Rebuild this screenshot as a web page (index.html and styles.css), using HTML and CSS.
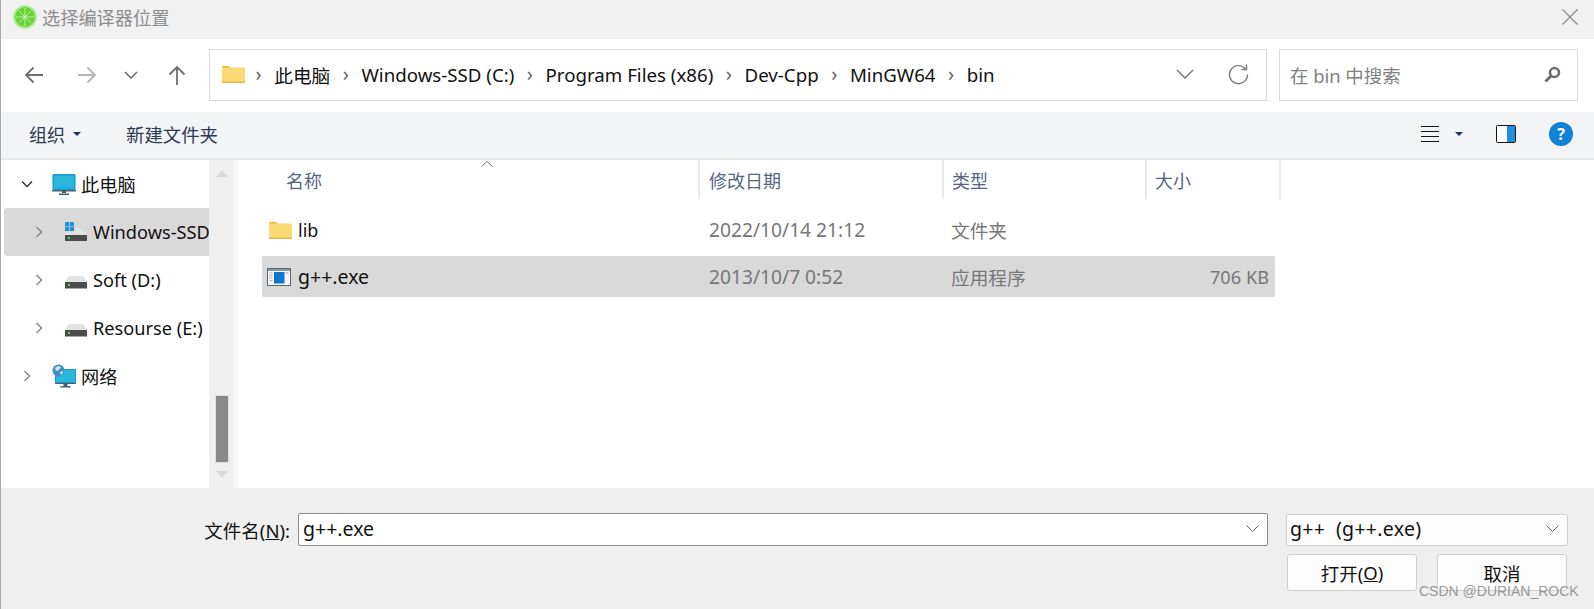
FILE: index.html
```html
<!DOCTYPE html>
<html lang="zh-CN">
<head>
  <meta charset="UTF-8">
  <title>选择编译器位置</title>
  <link rel="stylesheet" href="styles.css">
</head>
<body>
  <div class="window">
    <div class="titlebar">
      <svg class="app-icon" width="24" height="24" viewBox="0 0 24 24">
        <circle cx="12" cy="12" r="12" fill="#b5eaa2"/>
        <circle cx="12" cy="12" r="10" fill="#66d234"/>
        <g stroke="#c9f2b0" stroke-width="0.9">
          <path d="M12 3v18M3 12h18M5.6 5.6l12.8 12.8M18.4 5.6L5.6 18.4"/>
        </g>
        <circle cx="12" cy="12" r="1.3" fill="#e4f9d6"/>
      </svg>
      <span class="title">选择编译器位置</span>
      <svg class="close" width="16" height="16" viewBox="0 0 16 16"><path d="M.5.5l15 15M15.5.5l-15 15" stroke="#8a8a8a" stroke-width="1.2" fill="none"/></svg>
    </div>

    <div class="toolbar">
      <div class="nav">
        <svg class="nav-btn" width="20" height="18" viewBox="0 0 20 18"><path d="M19 9H2M9.5 1.5L2 9l7.5 7.5" stroke="#6e6e6e" stroke-width="1.8" fill="none"/></svg>
        <svg class="nav-btn" width="20" height="18" viewBox="0 0 20 18"><path d="M1 9h17M10.5 1.5L18 9l-7.5 7.5" stroke="#b4b4b4" stroke-width="1.8" fill="none"/></svg>
        <svg class="nav-btn" width="14" height="8" viewBox="0 0 14 8"><path d="M1 1l6 6 6-6" stroke="#6e6e6e" stroke-width="1.6" fill="none"/></svg>
        <svg class="nav-btn" width="18" height="20" viewBox="0 0 18 20"><path d="M9 20V2M1.5 9.5L9 2l7.5 7.5" stroke="#6e6e6e" stroke-width="1.8" fill="none"/></svg>
      </div>
      <div class="address">
        <svg class="folder" width="23" height="18" viewBox="0 0 23 18"><path d="M0 2a1 1 0 0 1 1-1h6l2 2h-9z" fill="#f5b72e"/><rect y="2.5" width="23" height="15.5" rx="1" fill="#fcd975"/><rect y="16.5" width="23" height="1.5" fill="#eab73f"/></svg>
        <span class="sep">›</span><span>此电脑</span>
        <span class="sep">›</span><span>Windows-SSD (C:)</span>
        <span class="sep">›</span><span>Program Files (x86)</span>
        <span class="sep">›</span><span>Dev-Cpp</span>
        <span class="sep">›</span><span>MinGW64</span>
        <span class="sep">›</span><span>bin</span>
        <svg class="addr-down" width="18" height="10" viewBox="0 0 18 10"><path d="M1 1l8 8 8-8" stroke="#6e6e6e" stroke-width="1.3" fill="none"/></svg>
        <svg class="refresh" width="21" height="21" viewBox="0 0 21 21"><path d="M17.5 5A9 9 0 1 0 19.5 10.5" stroke="#7a7a7a" stroke-width="1.4" fill="none"/><path d="M18.5 .5v5h-5" stroke="#7a7a7a" stroke-width="1.4" fill="none"/></svg>
      </div>
      <div class="search">
        <span>在 bin 中搜索</span>
        <svg width="17" height="17" viewBox="0 0 17 17"><circle cx="10.5" cy="6.5" r="4.5" fill="none" stroke="#6e6e6e" stroke-width="2.6"/><path d="M7 10l-5.500 5.500" stroke="#6e6e6e" stroke-width="3"/></svg>
      </div>
    </div>

    <div class="commands">
      <span class="cmd">组织</span><span class="caret"></span>
      <span class="cmd new-folder">新建文件夹</span>
      <svg class="view-icon" width="20" height="18" viewBox="0 0 20 18"><path d="M1 1.5h18M1 6.5h18M1 11.5h18M1 16.5h18" stroke="#111" stroke-width="1.2"/></svg>
      <span class="caret view-caret"></span>
      <svg class="pane-icon" width="20" height="18" viewBox="0 0 20 18"><rect x=".5" y=".5" width="19" height="17" rx="1" fill="#fff" stroke="#111"/><rect x="11" y="1" width="8" height="16" fill="#1e8fdc"/></svg>
      <span class="help">?</span>
    </div>

    <div class="main">
      <div class="tree">
        <div class="tree-row">
          <svg class="chev" width="14" height="14" viewBox="0 0 14 14"><path d="M2 4.5l5 5 5-5" stroke="#333" stroke-width="1.5" fill="none"/></svg>
          <svg class="pc" width="24" height="21" viewBox="0 0 24 21"><rect x=".5" y="0" width="23" height="16" rx="1" fill="#1b9ad2"/><rect x="2" y="1.5" width="20" height="13" fill="#2bb6dc"/><path d="M0 16h24v1.5H0zM10 17.5h4V19h-4zM7 19.5h10V21H7z" fill="#47606f"/></svg>
          <span>此电脑</span>
        </div>
        <div class="tree-row child selected">
          <svg class="chev" width="14" height="14" viewBox="0 0 14 14"><path d="M4.5 2l5 5-5 5" stroke="#8b8b8b" stroke-width="1.5" fill="none"/></svg>
          <svg class="drive" width="22" height="20" viewBox="0 0 22 20"><path d="M0 0h4.200v4.200H0zM4.800 0H9v4.200H4.800zM0 4.800h4.200V9H0zM4.800 4.800H9V9H4.800z" fill="#1b93e0"/><path d="M10 6h6l6 7H0v-3h10z" fill="#e2e2e2"/><rect y="13" width="22" height="6" fill="#4c4c4c"/><rect x="3" y="15" width="2" height="2" fill="#4ee04a"/></svg>
          <span>Windows-SSD (C:)</span>
        </div>
        <div class="tree-row child">
          <svg class="chev" width="14" height="14" viewBox="0 0 14 14"><path d="M4.5 2l5 5-5 5" stroke="#8b8b8b" stroke-width="1.5" fill="none"/></svg>
          <svg class="drive" width="22" height="18" viewBox="0 0 22 18"><path d="M4 5h14l4 6H0z" fill="#e2e2e2"/><rect y="11" width="22" height="6.5" fill="#4c4c4c"/><rect x="3" y="13" width="2" height="2" fill="#4ee04a"/></svg>
          <span>Soft (D:)</span>
        </div>
        <div class="tree-row child">
          <svg class="chev" width="14" height="14" viewBox="0 0 14 14"><path d="M4.5 2l5 5-5 5" stroke="#8b8b8b" stroke-width="1.5" fill="none"/></svg>
          <svg class="drive" width="22" height="18" viewBox="0 0 22 18"><path d="M4 5h14l4 6H0z" fill="#e2e2e2"/><rect y="11" width="22" height="6.5" fill="#4c4c4c"/><rect x="3" y="13" width="2" height="2" fill="#4ee04a"/></svg>
          <span>Resourse (E:)</span>
        </div>
        <div class="tree-row">
          <svg class="chev" width="14" height="14" viewBox="0 0 14 14"><path d="M4.5 2l5 5-5 5" stroke="#8b8b8b" stroke-width="1.5" fill="none"/></svg>
          <svg class="pc" width="24" height="24" viewBox="0 0 24 24"><rect x="3" y="5" width="21" height="14" rx="1" fill="#1b9ad2"/><rect x="4" y="6" width="19" height="12" fill="#2bb6dc"/><path d="M3 19h21v1H3zM11.5 20h4v2h-4zM8.5 22h10v1.5h-10z" fill="#47606f"/><circle cx="6.5" cy="6.5" r="6" fill="#3f8fc9"/><path d="M3 4l3-2 3 1-2 3-3 1zM8 8l3-1v2l-2 2z" fill="#cfe5f3"/></svg>
          <span>网络</span>
        </div>
      </div>

      <div class="scrollbar">
        <span class="arrow-up"></span>
        <span class="thumb"></span>
        <span class="arrow-down"></span>
      </div>

      <div class="files">
        <div class="file-head">
          <span class="col col-name">名称<svg class="sort" width="12" height="6" viewBox="0 0 12 6"><path d="M.5 5.5L6 .5l5.5 5" stroke="#777" fill="none"/></svg></span>
          <span class="col col-date">修改日期</span>
          <span class="col col-type">类型</span>
          <span class="col col-size">大小</span>
        </div>
        <div class="file-row">
          <span class="cell cell-name">
            <svg width="23" height="18" viewBox="0 0 23 18"><path d="M0 2a1 1 0 0 1 1-1h6l2 2h-9z" fill="#f5b72e"/><rect y="2.5" width="23" height="15.5" rx="1" fill="#fcd975"/><rect y="16.5" width="23" height="1.5" fill="#eab73f"/></svg>
            lib
          </span>
          <span class="cell cell-date">2022/10/14 21:12</span>
          <span class="cell cell-type">文件夹</span>
          <span class="cell cell-size"></span>
        </div>
        <div class="file-row selected">
          <span class="cell cell-name">
            <svg class="exe-icon" width="24" height="18" viewBox="0 0 24 18"><rect x=".5" y=".5" width="23" height="17" fill="#f6f6f6" stroke="#5b6670"/><rect x="1" y="1" width="22" height="2" fill="#8b96a0"/><rect x="7" y="4" width="10.5" height="11.5" fill="#0f75cf"/><path d="M2.500 5h3M2.500 7.500h3M2.500 10h3M2.500 12.500h3M18.500 5h3" stroke="#aab2b9"/></svg>
            <span class="exe-name">g++.exe</span>
          </span>
          <span class="cell cell-date">2013/10/7 0:52</span>
          <span class="cell cell-type">应用程序</span>
          <span class="cell cell-size">706 KB</span>
        </div>
      </div>
    </div>

    <div class="footer">
      <div class="footer-row">
        <span class="file-label">文件名(<u>N</u>):</span>
        <div class="name-input">
          <span>g++.exe</span>
          <svg width="13" height="7" viewBox="0 0 13 7"><path d="M.5.5l6 6 6-6" stroke="#666" fill="none"/></svg>
        </div>
        <div class="filter">
          <span>g++ &nbsp;(g++.exe)</span>
          <svg width="13" height="7" viewBox="0 0 13 7"><path d="M.5.5l6 6 6-6" stroke="#666" fill="none"/></svg>
        </div>
      </div>
      <div class="buttons">
        <span class="btn">打开(<u>O</u>)</span>
        <span class="btn">取消</span>
      </div>
    </div>

    <span class="watermark">CSDN @DURIAN_ROCK</span>
  </div>
</body>
</html>
```

FILE: styles.css
```css
html, body { margin: 0; padding: 0; }
body { font-family: "Noto Sans", "Noto Sans CJK SC", sans-serif; font-size: 18px; color: #111; background: #fff; }
svg { display: block; flex: none; }

.window { position: relative; width: 1594px; height: 609px; box-sizing: border-box; border-left: 1px solid #a8a8a8; overflow: hidden; display: flex; flex-direction: column; }

.titlebar { height: 39px; box-sizing: border-box; background: #f1f1f1; display: flex; align-items: center; padding: 0 16px 6px 12px; flex: none; }
.title { margin-left: 5px; color: #8d8d8d; font-size: 18.2px; }
.close { margin-left: auto; }

.toolbar { height: 73px; display: flex; align-items: center; flex: none; padding-bottom: 1px; box-sizing: border-box; }
.nav { width: 208px; display: flex; align-items: center; flex: none; padding-left: 23px; box-sizing: border-box; }
.nav-btn:nth-child(1) { margin-right: 33px; }
.nav-btn:nth-child(2) { margin-right: 27px; }
.nav-btn:nth-child(3) { margin-right: 30px; }
.address { width: 1058px; height: 52px; box-sizing: border-box; border: 1px solid #d9d9d9; display: flex; align-items: center; padding: 0 17px 2px 12px; flex: none; font-size: 18.7px; }
.folder { margin-right: -2px; }
.sep { color: #666; margin: 0 12.5px; font-size: 20px; line-height: 1; }
.addr-down { margin-left: auto; margin-right: 34px; }
.search { width: 299px; height: 52px; box-sizing: border-box; border: 1px solid #d9d9d9; margin-left: 12px; display: flex; align-items: center; justify-content: space-between; padding: 0 16px 1px 10px; color: #808080; flex: none; font-size: 18.4px; }

.commands { height: 48px; background: #f3f4f6; border-bottom: 2px solid #e8e8e8; box-sizing: border-box; display: flex; align-items: center; padding: 0 0 2px 28px; flex: none; color: #2a3a55; }
.cmd { font-size: 18px; }
.caret { width: 0; height: 0; border: 4px solid transparent; border-top: 4px solid #1d3358; border-bottom: 0; margin-left: 8px; }
.new-folder { margin-left: 45px; font-size: 18.4px; }
.view-icon { margin-left: auto; }
.view-caret { margin-left: 15px; }
.pane-icon { margin-left: 33px; }
.help { width: 24px; height: 24px; border-radius: 50%; background: #0f82d8; color: #fff; font-size: 16px; font-weight: 700; line-height: 24px; text-align: center; margin: 0 21px 0 33px; }

.main { height: 328px; display: flex; flex: none; }

.tree { width: 208px; flex: none; overflow: hidden; white-space: nowrap; font-size: 18.2px; }
.tree-row { height: 48px; display: flex; align-items: center; box-sizing: border-box; padding-left: 19px; }
.tree-row .chev { margin-right: 18px; }
.tree-row .pc + span { margin-left: 5px; }
.tree-row.child { margin-left: 3px; border-radius: 3px 0 0 3px; padding-left: 28px; }
.tree-row.child .chev { margin-right: 19px; }
.tree-row.child .drive + span { margin-left: 6px; }
.tree-row.selected { background: #d9d9d9; }

.scrollbar { width: 25px; background: #efefef; flex: none; display: flex; flex-direction: column; align-items: center; box-sizing: border-box; padding: 10px 0 10px; }
.arrow-up { width: 0; height: 0; border: 6px solid transparent; border-top: 0; border-bottom: 7px solid #dadada; }
.arrow-down { width: 0; height: 0; border: 6px solid transparent; border-bottom: 0; border-top: 7px solid #dadada; margin-top: 9px; }
.thumb { width: 12px; height: 66px; background: #888; margin-top: auto; box-shadow: 0 0 0 1px #e0e0e0; }

.files { flex: 1; border-left: 4px solid #f6f6f6; padding-left: 24px; min-width: 0; }
.file-head { height: 41px; display: flex; color: #566680; font-size: 18px; margin-left: -24px; padding-bottom: 2px; box-sizing: border-box; }
.col { display: flex; align-items: center; box-sizing: border-box; border-right: 2px solid #e9e9e9; padding-left: 9px; position: relative; }
.col-name { width: 462px; padding-left: 48px; }
.col-date { width: 244px; }
.col-type { width: 203px; padding-left: 8px; }
.col-size { width: 134px; padding-left: 8px; }
.sort { position: absolute; left: 243px; top: 1px; }

.file-row { width: 1013px; height: 41px; margin-top: 8px; display: flex; align-items: center; color: #777; border-radius: 2px; font-size: 19.2px; }
.file-row + .file-row { margin-top: 6px; }
.file-row.selected { background: #d9d9d9; }
.cell { display: block; box-sizing: border-box; }
.cell-name { width: 447px; padding-left: 7px; color: #111; display: flex; align-items: center; gap: 6px; font-size: 18px; }
.exe-icon { margin-left: -2px; margin-right: 1px; }
.exe-name { font-size: 19.5px; }
.cell-date { width: 242px; }
.cell-type { width: 203px; font-size: 18.7px; }
.cell-size { width: 115px; text-align: right; font-size: 18.2px; }

.footer { flex: 1; background: #efefef; box-sizing: border-box; padding-top: 25px; font-size: 19.5px; }
.footer-row { display: flex; align-items: center; height: 33px; }
.file-label { width: 297px; text-align: right; font-size: 18.5px; padding-right: 8px; box-sizing: border-box; }
.name-input { width: 970px; height: 33px; box-sizing: border-box; background: #fff; border: 1px solid #8a8a8a; border-radius: 2px; display: flex; align-items: center; justify-content: space-between; padding: 0 8px 2px 4px; }
.filter { width: 282px; height: 32px; margin-left: 18px; box-sizing: border-box; background: #fdfdfd; border: 1px solid #d0d0d0; border-radius: 2px; display: flex; align-items: center; justify-content: space-between; padding: 0 8px 2px 3px; letter-spacing: 0.3px; }
.buttons { display: flex; margin-left: 1286px; gap: 20px; margin-top: 8px; }
.btn { width: 130px; height: 37px; box-sizing: border-box; background: #fdfdfd; border: 1px solid #d0d0d0; border-radius: 3px; display: flex; align-items: center; justify-content: center; font-size: 18.5px; }

.watermark { position: absolute; left: 1418px; top: 583px; font-family: "Liberation Sans", sans-serif; font-size: 14px; color: rgba(120, 120, 120, 0.75); }
```
